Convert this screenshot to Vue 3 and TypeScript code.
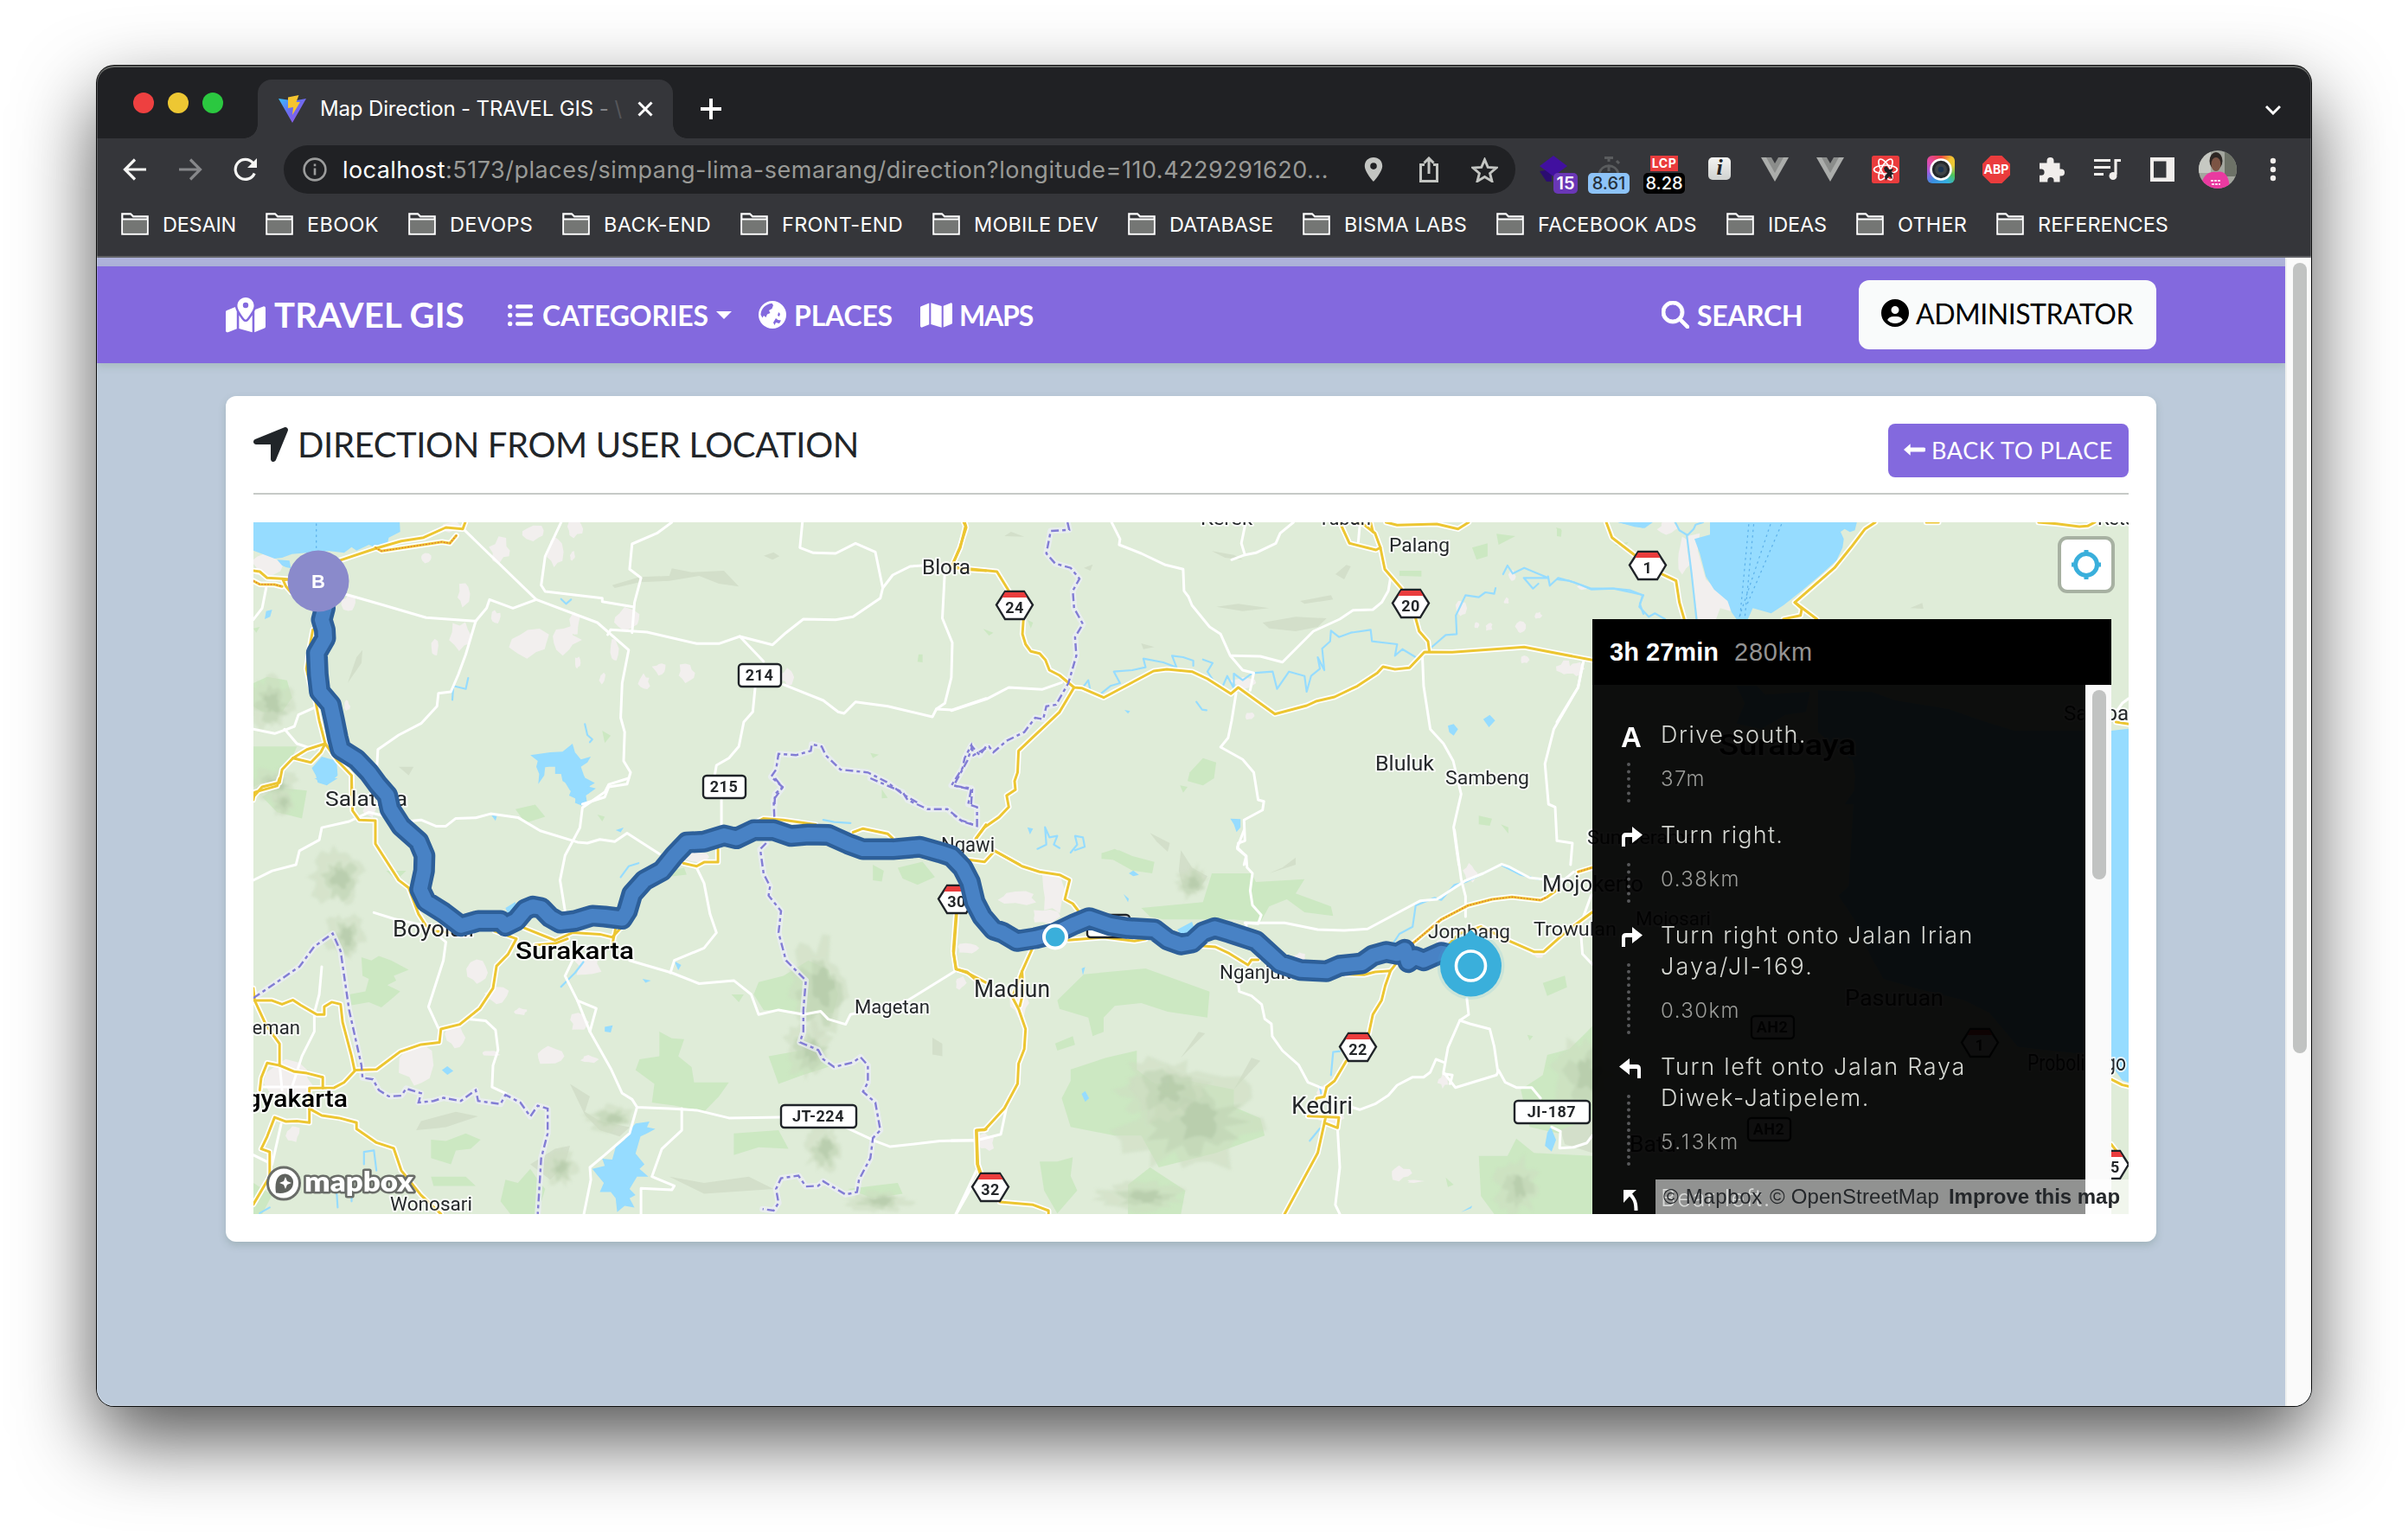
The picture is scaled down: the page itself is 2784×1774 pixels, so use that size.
<script setup lang="ts">
// ---------- text fitting ----------
// Sets the tracking of a label so that it takes exactly the given width.
const vFit = {
  mounted(el: HTMLElement, binding: { value: number }) {
    const natural = el.getBoundingClientRect().width
    const count = (el.textContent ?? '').length
    el.style.letterSpacing = `${(binding.value - natural) / count}px`
    el.style.width = `${binding.value}px`
  },
}

// ---------- browser chrome ----------
const bookmarks: [string, number][] = [
  ['DESAIN', 85], ['EBOOK', 83], ['DEVOPS', 96], ['BACK-END', 124], ['FRONT-END', 140],
  ['MOBILE DEV', 144], ['DATABASE', 120], ['BISMA LABS', 142], ['FACEBOOK ADS', 184],
  ['IDEAS', 68], ['OTHER', 80], ['REFERENCES', 151],
]

// ---------- directions ----------
interface Step { icon: string; lines: [string, number][]; distance: string; width: number }
const steps: Step[] = [
  { icon: 'depart', lines: [['Drive south.', 169]], distance: '37m', width: 52 },
  { icon: 'right', lines: [['Turn right.', 142]], distance: '0.38km', width: 92 },
  { icon: 'right', lines: [['Turn right onto Jalan Irian', 362], ['Jaya/Jl-169.', 177]], distance: '0.30km', width: 92 },
  { icon: 'left', lines: [['Turn left onto Jalan Raya', 353], ['Diwek-Jatipelem.', 242]], distance: '5.13km', width: 92 },
  { icon: 'slight', lines: [['Bear left.', 128]], distance: '', width: 0 },
]

// ---------- map ----------
// Each survey sheet has its own scale and origin on the 2168 x 800 canvas.
type Sheet = [sx: number, sy: number, ox: number, oy: number]
const sheets: Record<string, Sheet> = {
  nw: [0.574, 0.33333, -53, -174],
  sw: [0.574, 0.35714, -53, 296],
  n: [0.5102, 0.33333, 807, -44],
  s: [0.5102, 0.33333, 807, 356],
  ne: [0.4719, 0.33333, 1507, -174],
  se: [0.4719, 0.35714, 1507, 296],
}
const project = (sheet: string, pts: string) => {
  const [sx, sy, ox, oy] = sheets[sheet]
  return pts.split(' ').map((p) => {
    const [x, y] = p.split(',').map(Number)
    return `${(x * sx + ox).toFixed(1)},${(y * sy + oy).toFixed(1)}`
  }).join(' ')
}
const layer = (src: Record<string, string[]>) =>
  Object.entries(src).flatMap(([sheet, list]) => list.map((pts) => project(sheet, pts)))

const random = (seed: number) => {
  let s = seed
  return () => ((s = (s * 16807) % 2147483647) / 2147483647)
}
const star = (cx: number, cy: number, rx: number, ry: number, n: number, low: number, seed: number) => {
  const rnd = random(seed * 7919 + 13)
  rnd()
  return Array.from({ length: n }, (_, i) => {
    const r = low + (1 - low) * rnd()
    const a = (i / n) * Math.PI * 2
    return `${(cx + Math.cos(a) * rx * r).toFixed(1)},${(cy + Math.sin(a) * ry * r).toFixed(1)}`
  }).join(' ')
}
const patch = (sheet: string, x: number, y: number, rx: number, ry: number, n: number, low: number, seed: number) => {
  const [sx, sy, ox, oy] = sheets[sheet]
  return star(x * sx + ox, y * sy + oy, rx * sx, ry * sy, n, low, seed)
}

const townSpots: [string, number, number, number, number][] = [
  ['nw', 590, 620, 28, 50], ['nw', 660, 560, 32, 30], ['nw', 740, 545, 20, 35], ['nw', 650, 940, 50, 60], ['nw', 720, 930, 35, 60],
  ['nw', 510, 915, 26, 60], ['nw', 845, 860, 38, 45], ['nw', 700, 625, 18, 60], ['nw', 965, 1045, 22, 40], ['nw', 440, 645, 18, 22],
  ['nw', 515, 770, 15, 55], ['nw', 910, 1030, 16, 28], ['nw', 1170, 1060, 20, 34], ['nw', 120, 670, 36, 45], ['nw', 285, 800, 18, 35],
  ['nw', 740, 870, 14, 50], ['nw', 820, 960, 10, 50], ['nw', 458, 950, 10, 40], ['nw', 880, 1075, 14, 30], ['nw', 580, 850, 12, 26],
  ['nw', 735, 640, 8, 20], ['nw', 490, 540, 30, 22], ['nw', 745, 1010, 8, 26], ['nw', 795, 1065, 8, 26], ['nw', 280, 1160, 8, 22],
  ['sw', 545, 630, 25, 48], ['sw', 585, 705, 30, 36], ['sw', 420, 930, 38, 90], ['sw', 500, 840, 26, 48], ['sw', 765, 600, 34, 50],
  ['sw', 690, 900, 32, 34], ['sw', 750, 790, 26, 34], ['sw', 165, 970, 66, 75], ['sw', 1530, 550, 28, 22], ['sw', 172, 1150, 18, 36],
  ['sw', 570, 890, 26, 12], ['sw', 770, 910, 22, 14], ['sw', 630, 755, 20, 14], ['sw', 985, 255, 26, 24], ['sw', 325, 100, 18, 30],
  ['n', 665, 690, 40, 34], ['n', 1155, 430, 14, 45], ['n', 1290, 500, 15, 26], ['n', 1390, 640, 24, 32], ['n', 1270, 320, 10, 26],
  ['n', 677, 805, 13, 16], ['n', 1218, 495, 10, 18], ['n', 1330, 455, 10, 16], ['n', 1300, 610, 14, 16], ['n', 1258, 405, 7, 14], ['n', 1190, 490, 7, 14],
  ['s', 232, 220, 42, 95], ['s', 150, 235, 60, 34], ['s', 210, 300, 44, 36], ['s', 78, 1085, 22, 36], ['s', 1175, 150, 18, 40],
  ['s', 155, 600, 26, 50], ['s', 790, 440, 16, 22], ['s', 860, 1000, 32, 24], ['s', 1330, 430, 22, 14], ['s', 1115, 870, 15, 28],
  ['s', 1018, 1190, 28, 30], ['s', 1052, 1218, 28, 6], ['s', 1120, 385, 28, 22], ['s', 20, 530, 16, 26], ['s', 840, 905, 16, 26],
  ['ne', 310, 640, 22, 70], ['ne', 272, 540, 32, 28], ['ne', 63, 748, 15, 10], ['ne', 18, 1028, 16, 22], ['ne', 50, 1030, 22, 30],
]
const towns = townSpots.map(([s, x, y, rx, ry], i) => patch(s, x, y, rx, ry, 11, 0.5, i + 1))
towns.push(project('ne', '320,570 350,560 345,620 365,720 425,800 425,830 400,820 390,858 345,858'))

const parks = layer({
  nw: ['92,1080 120,1058 160,1070 170,1130 150,1180 110,1180 92,1160', '92,1300 180,1300 170,1340 140,1400 92,1440',
    '795,1245 812,1262 800,1288', '1335,1322 1352,1328 1340,1340', '1358,1448 1370,1478 1358,1480', '1432,980 1440,980 1440,1008 1430,1006', '92,890 105,885 98,905'],
  sw: ['310,580 330,590 345,575 370,590 405,620 375,640 380,655 362,670 388,690 370,715 350,742 325,725 290,735 285,700 318,690 325,650 312,640', '910,820 935,842 960,845 948,900 975,935 980,985 1050,985 1030,1030 1000,1080 940,1060 895,1050 900,990 862,945 870,910 910,900',
    '450,1170 480,1175 520,1150 550,1170 530,1200 500,1205 490,1250 450,1230', '1110,660 1160,640 1210,590 1250,620 1270,700 1260,760 1120,750 1100,700', '1130,900 1200,880 1260,930 1200,960 1150,990',
    '600,1300 625,1310 650,1265 665,1300 680,1330 665,1411 610,1411 590,1370', '1340,280 1362,300 1358,335 1340,330', '1390,290 1440,270 1465,320 1430,345 1400,325', '1060,1150 1150,1140 1170,1200 1110,1195 1060,1220',
    '110,60 140,30 200,40 190,130 140,110', '620,100 660,85 680,125 640,145', '930,300 960,290 965,312 935,318', '1055,700 1080,700 1070,725', '450,1290 520,1290 540,1320 455,1320',
    '92,1310 130,1350 110,1411 92,1411', '1290,1330 1390,1310 1400,1345 1340,1360', '400,300 380,330 360,300', '785,118 800,125 795,140'],
  n: ['540,1000 570,950 600,965 595,1020 570,1045 535,1030', '1180,220 1215,205 1215,250 1190,262', '1235,172 1278,180 1240,210', '1195,1150 1225,1160 1220,1185 1195,1180',
    '1015,300 1065,300 1065,320 1015,318', '340,1280 370,1265 430,1310 340,1300', '518,1045 535,1050 525,1070', '172,470 185,480 180,500', '72,502 95,515 85,525', '1370,150 1382,155 1380,182', '1245,1180 1262,1190 1262,1212'],
  s: ['590,150 680,150 690,180 800,170 780,220 860,265 865,298 800,285 760,240 720,265 700,320 640,310 480,310 450,300 430,270 570,250', '240,590 300,500 440,480 585,560 580,650 490,630 430,600 370,610 345,650 345,700 320,715 310,650 245,620',
    '340,80 380,70 410,90 460,110 455,150 410,140', '270,830 350,790 420,765 420,830 460,880 540,870 640,900 640,960 700,1000 710,1060 600,1120 470,1170 430,1060 370,1060 270,1030 250,930 270,870',
    '200,1150 240,1150 275,1135 270,1200 285,1250 240,1330 210,1250', '1195,1130 1260,1130 1280,1070 1320,1120 1452,1130 1452,1332 1230,1332 1200,1270', '1452,680 1452,1030 1400,1060 1310,1030 1290,900 1340,850 1350,780 1400,760 1440,700',
    '1340,530 1390,505 1395,545 1350,575', '400,1230 450,1170 530,1250 520,1332 400,1332', '235,740 275,715 280,745 240,765', '1120,1205 1138,1230 1125,1238', '1305,710 1318,715 1310,730'],
  ne: ['0,545 12,550 10,572 0,570', '140,600 175,590 165,612'],
})

const ridgeSpots: [string, number, number, number, number][] = [
  ['sw', 260, 320, 68, 110], ['sw', 275, 510, 48, 95], ['sw', 1230, 680, 78, 180], ['sw', 1210, 880, 60, 110], ['s', 540, 1000, 190, 210], ['s', 480, 900, 120, 130],
  ['s', 545, 180, 46, 70], ['nw', 125, 1150, 60, 110], ['sw', 810, 1100, 60, 50], ['s', 1430, 850, 80, 170], ['s', 1280, 1235, 60, 120], ['nw', 130, 1430, 60, 70],
  ['sw', 710, 1260, 40, 70], ['sw', 1240, 1200, 45, 90], ['s', 430, 1270, 120, 60], ['sw', 1350, 1370, 80, 40], ['sw', 150, 80, 30, 50],
]
const ridges = ridgeSpots.flatMap(([s, x, y, rx, ry], i) => [
  { pts: patch(s, x, y, rx, ry, 30, 0.55, i + 101), fill: '#cddcc1', opacity: 0.55 },
  { pts: patch(s, x + rx * 0.06, y + ry * 0.06, rx * 0.68, ry * 0.68, 26, 0.45, i + 211), fill: '#c0d4b4', opacity: 0.6 },
  { pts: patch(s, x + rx * 0.1, y, rx * 0.36, ry * 0.42, 18, 0.4, i + 307), fill: '#b0c7a5', opacity: 0.6 },
])
const hills = layer({
  nw: ['815,740 870,712 930,708 935,682 975,695 1040,690 1070,745 1030,735 990,708 930,725 870,730 820,750', '1120,638 1140,626 1152,640 1138,652', '385,1370 415,1370 405,1400', '300,990 312,965 310,1010 282,1080'],
  sw: ['730,990 770,1030 760,1080 790,1110 850,1130 830,1160 790,1140 760,1090', '430,1110 500,1080 545,1095 480,1130 420,1140', '650,1250 700,1200 730,1190 720,1250 690,1300', '830,1240 860,1290 845,1340', '930,1290 1000,1310 1090,1290 1140,1330 1000,1345', '1460,840 1480,860 1480,900 1460,895'],
  n: ['120,180 135,165 165,182', '590,232 640,245 660,262 620,255', '600,425 650,415 720,430 660,440', '705,480 780,460 850,465 830,495 780,510 720,500', '870,312 895,280 905,285 890,330', '790,405 860,385 865,400 800,415', '80,152 160,150', '430,552 460,565 435,572', '300,290 320,278 315,300'],
  s: ['450,10 495,45 490,75 465,40', '520,70 545,130 580,160 560,210 525,200 515,140', '680,790 700,800 640,900', '750,130 780,95 780,120 720,150', '1380,1040 1452,1000 1452,1120 1390,1090', '560,700 575,705 520,790'],
  ne: ['865,820 895,802 898,822', '1370,520 1380,520'],
})

const water = layer({
  nw: ['92,522 387,522 388,555 365,575 362,598 340,612 325,600 300,620 290,608 275,628 245,622 200,628 170,632 150,645 135,648 92,620', '140,652 165,655 168,682 158,678 150,672',
    '650,1330 690,1320 715,1318 735,1290 740,1320 752,1345 772,1335 765,1355 752,1370 758,1400 770,1440 782,1445 762,1470 765,1500 748,1500 740,1480 728,1470 735,1440 715,1420 712,1395 700,1395 700,1370 688,1370 680,1372 678,1400 666,1430 668,1395 662,1370 665,1350',
    '210,1375 230,1335 260,1350 262,1400 240,1435 222,1425 218,1400', '118,830 130,825 126,850 115,858'],
  sw: ['862,1118 890,1112 885,1130 902,1135 885,1150 872,1160 862,1215 880,1250 870,1265 888,1290 865,1290 850,1330 862,1350 850,1360 860,1390 840,1385 825,1405 822,1360 812,1340 790,1340 798,1310 785,1285 775,1265 800,1255 795,1232 815,1235 822,1195 840,1170 850,1140',
    '715,0 762,0 780,15 765,30 768,50 752,45 755,90 740,80 742,50 730,40', '472,945 483,932 495,948 483,960', '800,805 816,800 812,823 800,820', '940,592 954,605 948,622', '600,420 620,400 622,430 605,440', '215,0 262,0 240,22',
    '572,120 583,122 580,138', '822,168 838,160 832,175', '876,650 893,655 882,662'],
  n: ['1125,838 1138,832 1148,850 1138,872 1128,860', '1205,815 1220,800 1232,820 1218,843', '632,1160 655,1162 655,1190 646,1207 640,1180', '172,1190 185,1195 178,1215', '392,783 405,787 400,796', '1510,132 1568,132 1568,152'],
  s: ['512,345 545,318 550,340 565,345 540,355 520,365', '295,915 303,905 312,930 303,943', '390,222 402,238 400,250', '402,150 412,140 425,155 412,160', '1350,1050 1358,1030 1370,1075 1360,1115 1345,1095', '1155,1325 1180,1303 1178,1312', '295,480 303,475 298,503'],
  ne: ['375,522 735,522 730,550 718,556 705,545 695,555 703,580 700,610 685,655 650,700 600,760 555,810 525,838 480,820 468,858 440,858 428,835 418,795 385,755 365,710 350,630 337,580 375,565', '150,522 235,522 215,542 190,538',
    '640,1105 770,1110 830,1140 960,1170 1040,1210 1120,1245 1358,1245 1401,1238 1401,1500 705,1500 735,1440 725,1350 640,1250', '440,1090 490,1090 510,1120 620,1110 610,1180 560,1190 500,1240 440,1220 460,1150'],
  se: ['730,0 1401,0 1401,985 1385,978 1370,950 1340,900 1130,870 1060,760 1000,720 880,680 800,650 770,580 730,460 690,380 715,350'],
})
const rivers = layer({
  nw: ['493,1138 495,1090 520,1100 525,1062', '760,1222 765,1260 775,1275 770,1285', '712,788 722,805 732,790'],
  sw: ['712,675 740,630 757,595', '1240,135 1262,142 1295,145', '832,320 848,285 868,275', '315,1250 315,1210 335,1205 340,1270', '262,1390 260,1340 290,1330 290,1370', '105,1408 125,1390'],
  n: ['300,700 310,680 314,710', '340,725 360,700 382,690 368,650 410,645 440,635 435,605 480,618 510,635 500,595 525,600 548,612 548,630', '570,608 592,620 580,650 605,708', '615,700 625,665 640,708 640,657 660,680 682,655 728,650 738,710 765,650 800,665 805,720 815,665 835,640 830,600 845,645 840,570 858,545 860,508 878,530 905,515 950,505 953,545 1010,555 1005,595 1022,572 1052,600',
    '1087,567 1120,523 1145,520 1143,455 1165,385 1195,392 1210,375 1230,380 1233,360', '1250,312 1260,282 1272,310 1298,290 1352,325 1297,325 1318,362 1330,345', '1352,320 1356,352 1375,325 1410,340 1450,362 1500,362 1540,375 1568,385 1560,415 1568,450',
    '195,1265 215,1250 212,1190 222,1225 240,1220 232,1250 245,1262', '270,1278 285,1250 280,1220 298,1225 302,1258 280,1270', '555,755 568,782 578,784'],
  s: ['1000,395 1015,360 1045,335 1052,262 1095,235 1110,242 1140,190 1165,180 1205,150 1245,120 1290,155 1330,170', '880,767 865,770 860,850', '812,1078 835,1035', '835,890 838,915'],
  ne: ['318,565 330,700 342,858', '290,522 300,550 320,567 335,545 340,530 358,522', '0,720 30,725 60,740 85,755 140,752 180,758 210,775 202,815 225,850 240,838 265,858'],
})

const minorRoads = layer({
  nw: ['515,545 662,790 785,870 848,965 835,1080 832,1200 840,1250 838,1350 852,1390 845,1430 808,1440 800,1475 755,1500', '712,522 680,640 672,740 680,762 795,785 795,797 857,815', '935,522 905,560 855,597 850,685 873,715 860,800 855,905',
    '275,770 345,805 440,853 540,865 562,820 568,790 615,820 662,790', '540,865 520,980 505,1050 490,1110 465,1115 462,1160 430,1220 385,1260 360,1290 343,1310 340,1400 345,1450', '812,895 885,903 985,943 1030,943 1072,918 1138,947 1165,905 1200,858 1265,860 1300,850 1355,785 1360,750 1380,705 1415,675 1440,672',
    '812,895 806,912', '1072,918 1120,1005', '1103,1095 1098,1180 1080,1215 1070,1300 1050,1340 1025,1365 1022,1395', '1198,522 1193,610 1220,628 1265,630 1305,595 1345,625 1360,750',
    '1485,690 1480,855 1500,940 1498,1060 1485,1150 1468,1170 1460,1197 1370,1160 1305,1145 1282,1185 1270,1180 1240,1140 1160,1085', '1468,1170 1500,1173 1568,1133', '92,860 110,820 118,750', '92,1240 135,1255 160,1240 175,1230 183,1190 215,1165', '155,1240 180,1290 215,1310'],
  sw: ['92,330 130,300 178,280 185,235 225,200 230,160 285,140 325,110 400,140 430,135 460,155 480,155 500,130 540,128 570,115 625,127 670,170 745,207 765,210 790,198 820,205 845,178 910,245', '848,0 808,20 800,45 755,95 750,160 720,250 710,330 720,430',
    '335,435 375,455 440,478 480,530 475,590 445,740 465,810', '230,610 225,700 215,760 215,820 190,900 170,1000', '525,780 560,785 580,815 585,880 575,930 573,1000 600,1020', '735,590 720,640 745,720 770,820 812,940 835,1020 855,1040 865,1065 930,1070 985,1075 1050,1100 1155,1098',
    '745,720 783,745 770,820', '865,1065 850,1150 800,1220 770,1260 772,1300 758,1411', '955,1070 955,1140 915,1200 895,1290 940,1320 935,1333 873,1328 873,1411', '850,590 935,630 990,665 1060,655 1095,700 1110,765 1150,750 1200,765 1235,755 1250,780 1285,797 1295,765 1410,720 1505,625',
    '985,290 1000,340 1012,440 1025,500 1000,550 940,590 932,630', '1035,70 1035,150', '1285,1130 1345,1175 1375,1193 1475,1175 1548,1172', '148,1120 130,1250 92,1220', '105,1000 200,1000', '145,925 150,1010', '1558,1270 1508,1411'],
  n: ['363,132 382,190 380,210 430,240 485,280 525,295 527,370 537,390 545,420 585,495 610,520 632,595 660,645 685,655 677,715', '665,145 657,205 665,245 635,262', '665,245 690,238 735,205 745,170 775,132', '635,595 700,597 750,617 820,510 880,468 910,437 955,435 975,410 990,370 995,325',
    '645,725 635,820 627,880 610,912 660,955 685,1000 695,1095 708,1100 705,1130 663,1165 665,1237 650,1245 648,1265 668,1290 663,1320', '1067,590 1070,700 1085,850 1115,900 1137,960 1155,1075 1143,1155 1138,1190 1145,1270 1150,1320',
    '1430,625 1420,705 1365,850 1345,970 1353,1110 1368,1120 1372,1237 1407,1245 1403,1320', '0,785 80,745 105,725 130,705 205,712 250,688', '925,150 922,200'],
  s: ['663,0 648,60 668,90 670,130 682,150 677,210 682,260 702,295 695,325 665,322', '665,322 755,322 830,345 890,348 943,343 1062,245 1100,240 1140,200 1165,175 1205,150 1247,118 1265,128 1310,165 1340,170 1390,170 1410,145', '1140,0 1155,170 1165,230 1165,300', '668,322 668,350',
    '650,530 652,560 680,575 703,605 710,655 725,672 727,715 750,765 787,815 808,875 840,895', '1168,585 1172,640 1152,660 1125,755 1115,840 1142,893 1235,850 1240,833 1255,875 1280,893 1315,893 1335,930', '1152,660 1175,672 1220,690 1230,750 1238,835',
    '1115,805 1098,795 1085,840 1070,857 1045,857 1010,885 990,920 960,950 925,970 905,960', '1115,845 1135,850 1130,880', '875,1035 880,1170 870,1300 880,1332', '1360,1030 1380,1045 1378,1103 1410,1100 1440,1085 1452,1060', '0,1077 55,1077 112,1055 130,925', '60,1170 10,1332', '1450,225 1425,330 1430,430 1452,465'],
  ne: ['65,1005 52,1095 0,1215', '1401,1133 1385,1150 1370,1180'],
})
const majorRoads = layer({
  nw: ['519,522 514,545 480,540 435,575 390,587 340,612 270,652 228,680', '501,568 488,595 472,590 350,622 338,610', '92,690 105,693 120,715 150,718 165,720 152,722 158,745 168,765', '92,725 105,737 135,738 150,745', '1525,522 1528,540 1515,610 1500,670 1520,685 1568,690',
    '212,895 205,960 199,1030 207,1090 217,1140 225,1210 237,1290 200,1310 172,1340 150,1380 145,1425 110,1440 92,1475', '172,1340 208,1355 228,1320 237,1290 262,1350 290,1400 290,1500'],
  sw: ['290,0 292,105 305,135 338,137 338,212 385,330 405,355 425,440 440,478 458,495 520,505', '92,70 95,45 140,25 145,0', '578,495 622,520 605,570 582,608 575,680 548,745 508,797 470,812 467,855 430,862 388,885 340,943 298,945 275,985 255,1002 205,1003 205,1115 180,1110 158,1112 135,1098 120,1160 108,1200 125,1210 125,1290 92,1380',
    '92,680 95,720 118,800 145,860 145,930 120,922 108,970 105,1010', '145,930 175,950 200,955 232,968 232,1003', '95,720 130,720 150,732 172,718 188,735 220,765 235,765 235,740 250,725 268,732 272,790 290,900 296,945', '205,1070 230,1092 265,1100 300,1115 300,1135 340,1180 375,1198 390,1270 430,1350 470,1411',
    '638,485 700,525 735,500 790,505 815,515 832,485', '660,540 700,535 725,520', '822,485 815,540', '958,275 985,285 1000,272 1028,272 1028,230', '1108,140 1120,130 1160,135 1225,150', '1300,175 1320,163 1370,180 1380,195', '1508,430 1502,560 1508,618 1530,630 1568,662', '1548,195 1568,150', '1568,1137 1548,1140 1550,1250 1558,1290'],
  n: ['28,132 32,145 20,220 5,270', '0,290 40,293 103,303 130,370', '163,470 161,520 168,555 180,580 200,587 213,610 222,645 245,663 278,705 295,707 345,740 458,648 488,642 545,650 580,675 633,727 650,705 733,797 805,768 828,752 868,738 920,700 965,655 978,633 1005,642 1038,637 1072,582 1135,583 1298,565 1452,610 1568,640',
    '278,705 245,790 152,925 150,1000 143,1030 145,1060 125,1080 130,1120 108,1155 75,1190 55,1230', '880,132 902,205 962,228 972,220 960,170 935,140 915,132', '950,132 955,165', '972,220 982,295 1020,362', '1052,465 1060,510 1080,545 1083,578', '985,132 1010,142 1100,138 1148,155 1172,132', '35,1302 75,1310 98,1272 155,1320'],
  s: ['98,72 160,125 200,145 245,155 268,173 257,240 275,255 290,285', '12,290 5,430 10,482 35,492 60,525', '265,382 345,372 415,385 440,378', '185,405 160,490 138,580 152,620 168,690 165,760 152,810 150,880 120,965 75,1040 57,1042 60,1160 68,1195', '160,490 163,560 155,610', '110,1290 185,1300 220,1320 220,1332',
    '570,402 598,405 630,428 672,468 680,450 695,450', '895,500 935,502 960,492 995,488 983,540 975,590 955,640 946,705', '995,488 1040,400 1110,310 1170,262 1225,240 1270,232 1335,243 1350,232 1375,205', '1420,145 1452,130', '1265,385 1320,422 1342,422 1395,350 1430,310 1452,285', '1125,400 1150,360 1200,335 1265,385',
    '895,800 868,870 850,892 845,925 828,930 825,940', '808,992 878,997 875,1033 845,1015 848,997 830,1120 755,1332'],
  ne: ['121,522 135,575 190,635', '255,700 292,725 300,800 312,858', '780,522 755,545 720,610 680,680 583,800 637,858', '583,800 600,822 597,845 555,858', '1180,522 1225,527 1280,537 1300,535 1318,522', '905,522 935,522', '1370,1215 1401,1222'],
  se: ['1358,975 1385,993 1401,998', '1358,1185 1370,1205'],
})
const tollRoads = layer({
  nw: ['501,568 488,595 472,590 350,622 338,610', '92,725 105,737 135,738 150,745'],
  s: ['1040,400 1110,310 1170,262 1225,240 1270,232 1335,243 1350,232', '1420,145 1452,130'],
})
const borders = layer({
  nw: ['1142,1500 1143,1465 1158,1440 1135,1405 1145,1380 1150,1325 1185,1330 1215,1315 1217,1292 1237,1300 1245,1330 1275,1380 1330,1390 1370,1425 1400,1465 1435,1500', '1538,1500 1540,1450 1503,1435 1530,1350 1540,1300 1555,1330 1568,1300'],
  sw: ['1143,0 1158,30 1140,70 1142,140', '1125,210 1113,230 1120,310 1133,350 1130,380 1155,430 1150,500 1165,590 1205,655 1200,750 1200,820 1193,855 1230,880 1240,910 1262,935 1300,920 1315,903 1330,930 1330,985 1320,1015 1345,1050 1355,1140 1340,1165 1335,1230 1312,1300 1308,1340 1285,1348 1240,1305 1230,1320 1205,1322 1190,1287 1155,1295 1145,1330 1150,1375 1140,1400 1118,1395',
    '92,712 185,610 215,545 252,503 268,560 285,750 310,930 312,970 333,975 345,1010 365,1030 390,1028 400,1005 430,1020 425,1050 455,1045 475,1035 510,1045 540,1010 545,1045 590,1055 600,1025 630,1050 650,1095 665,1060 685,1070 685,1150 672,1230 665,1411', '1335,0 1400,45 1410,70 1450,100 1490,100 1520,140 1550,155'],
  n: ['263,132 267,158 225,162 215,240 235,275 270,290 290,328 275,370 278,430 298,485 280,530 283,595 265,690 237,765 215,770 208,815 190,810 165,860 125,890 95,930 85,910 50,940 45,905 30,950 25,985 0,1045 45,1055 38,1110 58,1120 58,1185 20,1165 0,1140'],
})
const ferries = layer({
  nw: ['219,528 219,610'],
  ne: ['470,530 448,858', '482,530 460,858', '523,530 445,858', '550,530 465,810'],
})
const route = [
  project('nw', '232,790 236,820 230,860 236,895 237,925 220,975 222,1050 226,1110 248,1155 255,1210 262,1270 268,1310 300,1345 325,1390 342,1430 362,1470'),
  project('sw', '368,100 390,155 425,205 437,250 436,300 428,360 440,400 475,435 510,478 545,462 590,462 600,478 622,460 640,425 655,415 672,420 690,450 710,468 740,462 775,445 800,448 835,455 845,430 855,375 880,330 915,300 940,250 965,208 1000,205 1040,185 1065,195 1100,168 1140,168 1175,187 1210,182 1250,183 1290,212 1320,230 1380,230 1435,222 1475,240'),
  project('s', '0,90 25,130 42,180 53,250 70,300 95,345 115,355 148,385 190,375 235,358 280,325 312,305 360,330 400,340 460,345 490,380 520,397 545,390 570,355 597,340 630,355 690,385 715,420 745,462 790,485 850,490 880,470 930,462 955,435 985,422 1010,430 1027,415 1035,458 1050,440 1070,452 1110,425 1150,440'),
].join(' ')

interface Place { t: string; x: number; y: number; w: number; s: number; b?: boolean }
const places: Place[] = [
  { t: 'Blora', x: 773, y: 60, w: 56, s: 23 },
  { t: 'Salatiga', x: 83, y: 328, w: 95, s: 24 },
  { t: 'Boyolali', x: 161, y: 479, w: 94, s: 25 },
  { t: 'Surakarta', x: 303, y: 505, w: 137, s: 28, b: true },
  { t: 'Yogyakarta', x: -43, y: 676, w: 152, s: 28, b: true },
  { t: 'Sleman', x: -20, y: 592, w: 74, s: 22 },
  { t: 'Magetan', x: 695, y: 568, w: 87, s: 22 },
  { t: 'Wonosari', x: 158, y: 796, w: 95, s: 22 },
  { t: 'Ngawi', x: 795, y: 381, w: 62, s: 23 },
  { t: 'Madiun', x: 833, y: 549, w: 88, s: 27 },
  { t: 'Nganjuk', x: 1117, y: 528, w: 82, s: 22 },
  { t: 'Kediri', x: 1200, y: 684, w: 71, s: 27 },
  { t: 'Jombang', x: 1358, y: 481, w: 95, s: 22 },
  { t: 'Trowulan', x: 1480, y: 478, w: 96, s: 22 },
  { t: 'Mojokerto', x: 1490, y: 427, w: 117, s: 26 },
  { t: 'Sumberame', x: 1542, y: 372, w: 126, s: 22 },
  { t: 'Palang', x: 1313, y: 34, w: 70, s: 22 },
  { t: 'Kerek', x: 1095, y: 3, w: 60, s: 22 },
  { t: 'Tuban', x: 1231, y: 3, w: 61, s: 23 },
  { t: 'Bluluk', x: 1297, y: 287, w: 68, s: 23 },
  { t: 'Sambeng', x: 1378, y: 303, w: 97, s: 22 },
  { t: 'Surabaya', x: 1694, y: 269, w: 159, s: 34, b: true },
  { t: 'Mojosari', x: 1598, y: 466, w: 87, s: 22 },
  { t: 'Pasuruan', x: 1840, y: 559, w: 114, s: 26 },
  { t: 'Probolinggo', x: 2051, y: 634, w: 114, s: 25 },
  { t: 'Batu', x: 1591, y: 728, w: 54, s: 26 },
  { t: 'Sampang', x: 2093, y: 229, w: 102, s: 24 },
  { t: 'Ketapang', x: 2132, y: 3, w: 92, s: 22 },
]
const plates = [
  { t: '214', x: 560, y: 163, w: 50 }, { t: '215', x: 519, y: 292, w: 50 }, { t: 'JT-224', x: 609, y: 673, w: 88 },
  { t: 'JI-187', x: 1457, y: 668, w: 88 }, { t: '', x: 963, y: 453, w: 50 }, { t: 'AH2', x: 1731, y: 570, w: 50 }, { t: 'AH2', x: 1727, y: 688, w: 50 },
]
const hexes = [
  { t: '24', x: 880, y: 96 }, { t: '20', x: 1338, y: 94 }, { t: '1', x: 1612, y: 50 }, { t: '30', x: 813, y: 436 },
  { t: '22', x: 1277, y: 607 }, { t: '32', x: 852, y: 769 }, { t: '1', x: 1996, y: 602 }, { t: '15', x: 2147, y: 743 },
]
</script>

<template>
  <div class="desktop">
    <div class="window">
      <header class="tabstrip">
        <div class="lights"><i class="red" /><i class="yellow" /><i class="green" /></div>
        <div class="tab">
          <svg class="favicon" viewBox="0 0 32 32">
            <defs>
              <linearGradient id="vite" x1="0" y1="0" x2="1" y2="1"><stop offset="0" stop-color="#35c2ff" /><stop offset=".45" stop-color="#6b6df0" /><stop offset="1" stop-color="#9b52e8" /></linearGradient>
            </defs>
            <path d="M0 4 16 32 32 4 18 6.500z" fill="url(#vite)" />
            <path d="M11 2.500 23.500 0 20.500 8 25 8 16 23 17 14 11 15z" fill="#f5c52f" />
          </svg>
          <span class="tab-title"><span v-fit="316">Map Direction - TRAVEL GIS</span><span class="faded"> - </span><span class="ghost">\</span></span>
          <svg class="tab-close" viewBox="0 0 18 18"><path d="M1.500 1.500 16.500 16.500M16.500 1.500 1.500 16.500" /></svg>
        </div>
        <svg class="plus" viewBox="0 0 24 24"><path d="M12 0V24M0 12H24" /></svg>
        <svg class="chevron" viewBox="0 0 18 12"><path d="M1 2 9 10 17 2" /></svg>
      </header>

      <div class="toolbar">
        <svg class="nav" viewBox="0 0 28 28"><path d="M27 14H3M14 2.500 2.500 14 14 25.500" /></svg>
        <svg class="nav dim" viewBox="0 0 28 28"><path d="M1 14H25M14 2.500 25.500 14 14 25.500" /></svg>
        <svg class="nav" viewBox="0 0 28 28"><path d="M24.200 18.500A11.500 11.500 0 1 1 22.500 6.500L24 8.500" /><path d="M27 1V12H16z" class="solid" /></svg>
        <div class="omnibox">
          <svg class="info" viewBox="0 0 28 28"><circle cx="14" cy="14" r="12.400" /><path d="M14 12.500V20.500M14 7.500V10.300" /></svg>
          <span v-fit="119" class="host">localhost</span>
          <span v-fit="1021" class="path">:5173/places/simpang-lima-semarang/direction?longitude=110.4229291620...</span>
          <svg class="pin" viewBox="0 0 22 28"><path fill-rule="evenodd" d="M11 0C5 0 .8 4.300.8 10 .8 17 11 28 11 28S21.200 17 21.200 10C21.200 4.300 17 0 11 0zm0 6.300a3.800 3.800 0 1 1 0 7.600 3.800 3.800 0 0 1 0-7.600z" /></svg>
          <svg class="share" viewBox="0 0 24 30"><path d="M7 9.500H2.500V28.500H21.500V9.500H17M12 20V2.500M6.500 7.500 12 2 17.500 7.500" /></svg>
          <svg class="starred" viewBox="0 0 30 28"><path d="M15 2.500 18.600 11 28 11.700 20.900 17.800 23.200 26.700 15 21.800 6.800 26.700 9.100 17.800 2 11.700 11.400 11z" /></svg>
        </div>
        <div class="extensions">
          <div class="slot">
            <svg class="ext" viewBox="0 0 32 32"><path d="M0 18 8 30 14 30 14 16z" fill="#2b0d70" /><path d="M16 0 32 12 16 24 0 12z" fill="#41109f" /></svg>
            <b class="badge violet">15</b>
          </div>
          <div class="slot">
            <svg class="ext" viewBox="0 0 32 32"><path d="M5 20A11.500 11.500 0 0 1 27 20M11 2.500H21M16 3V7M16 11V18M25 6 28 9" stroke="#5a5c5e" stroke-width="3" fill="none" /></svg>
            <b class="badge sky">8.61</b>
          </div>
          <div class="slot">
            <span class="lcp">LCP</span>
            <b class="badge black">8.28</b>
          </div>
          <div class="slot"><span class="inspect">i</span></div>
          <div v-for="n in 2" :key="n" class="slot">
            <svg class="ext" viewBox="0 0 32 32"><path d="M0 2H32L16 30z" fill="#abadab" /><path d="M6 2H26L16 20z" fill="#8b8d8b" /><path d="M12 2H20L16 9z" fill="#35363a" /></svg>
          </div>
          <div class="slot">
            <svg class="ext" viewBox="0 0 32 32"><rect width="32" height="32" rx="2.500" fill="#ea3c3d" /><g fill="none" stroke="#fff" stroke-width="1.700"><ellipse cx="16" cy="16" rx="13.500" ry="5" /><ellipse cx="16" cy="16" rx="13.500" ry="5" transform="rotate(60 16 16)" /><ellipse cx="16" cy="16" rx="13.500" ry="5" transform="rotate(120 16 16)" /></g><path d="M14 14 17 12 20 16 25 15 23 19 26 21 23 22 24 27 20 24 16 29 15 24 18 20 15 18z" fill="#1f2124" /></svg>
          </div>
          <div class="slot"><span class="camera"><svg viewBox="0 0 32 32"><circle cx="16" cy="16" r="11.500" fill="#25282c" stroke="#fff" stroke-width="2.600" /><circle cx="16" cy="16" r="7" fill="#3e4348" /><circle cx="16" cy="16" r="3.200" fill="#1c3350" /></svg></span></div>
          <div class="slot"><span class="abp">ABP</span></div>
          <div class="slot">
            <svg class="ext" viewBox="0 0 32 32"><path d="M2 8.500H10.500V6A4 4 0 0 1 18.500 6V8.500H25.500V15.500H27A4 4 0 0 1 27 23.500H25.500V30.500H18.500V28.500A3.600 3.600 0 0 0 11.300 28.500V30.500H2V22.800H4A3.600 3.600 0 0 0 4 15.600H2z" fill="#f1eeec" /></svg>
          </div>
          <div class="slot">
            <svg class="ext" viewBox="0 0 32 32"><path d="M1 5.500H20M1 13.500H20M1 21.500H12M26 22V5.500H32" stroke="#f1eeec" stroke-width="3.200" fill="none" /><circle cx="23" cy="23.500" r="4.500" fill="#f1eeec" /></svg>
          </div>
          <div class="slot">
            <svg class="ext" viewBox="0 0 32 32"><path fill-rule="evenodd" d="M2 2H30V30H2zM6 6.500V25.500H20.500V6.500z" fill="#f1eeec" /></svg>
          </div>
          <div class="slot">
            <svg class="avatar" viewBox="0 0 44 44">
              <defs><clipPath id="round"><circle cx="22" cy="22" r="22" /></clipPath></defs>
              <g clip-path="url(#round)"><rect width="44" height="44" fill="#a4a79f" /><path d="M0 0H14V26H0z" fill="#c6c8c2" /><path d="M30 0H44V30H30z" fill="#6d7267" /><path d="M2 44C4 28 12 24 20 25 28 23 35 26 36 44z" fill="#e93aa0" /><ellipse cx="20" cy="12" rx="7.500" ry="10" fill="#2d2623" /><ellipse cx="20" cy="16" rx="5.500" ry="8" fill="#7c5444" /><path d="M14 35H26M15 39H25" stroke="#fbd3ea" stroke-width="2.200" stroke-dasharray="3 1" /></g>
            </svg>
          </div>
          <div class="slot"><svg class="ext" viewBox="0 0 32 32"><g fill="#f1eeec"><circle cx="16" cy="6" r="3.200" /><circle cx="16" cy="16" r="3.200" /><circle cx="16" cy="26" r="3.200" /></g></svg></div>
        </div>
      </div>

      <nav class="bookmarks">
        <span v-for="[name, width] in bookmarks" :key="name" class="bookmark">
          <svg class="folder" viewBox="0 0 32 26"><path d="M1.300 24.700V1.300H11L14 4.300H30.700V24.700z" fill="#35363a" stroke="#fff" stroke-width="2.200" /><path d="M2.400 8H29.600V23.600H2.400z" fill="#747674" /><path d="M1.300 7.600H30.700" stroke="#fff" stroke-width="2" /></svg>
          <span v-fit="width">{{ name }}</span>
        </span>
      </nav>

      <div class="viewport">
        <main class="page">
          <div class="navbar">
            <a class="brand">
              <svg viewBox="0 0 576 512"><path d="M408 120c0 54.600-73.100 151.900-105.200 192c-7.700 9.600-22 9.600-29.600 0C241.100 271.900 168 174.600 168 120C168 53.700 221.700 0 288 0s120 53.700 120 120zm8 80.400c3.500-6.900 6.700-13.800 9.600-20.600c.5-1.200 1-2.500 1.500-3.700l116-46.400C558.900 123.400 576 135 576 152V422.800c0 9.800-6 18.600-15.100 22.300L416 503V200.400zM137.600 138.300c2.400 14.100 7.200 28.300 12.800 41.500c2.900 6.800 6.100 13.700 9.600 20.600V451.800L32.900 502.700C17.100 509 0 497.400 0 480.400V209.600c0-9.800 6-18.600 15.100-22.300l122.600-49zM327.800 332c13.900-17.400 35.700-45.700 56.200-77V504.300L192 449.400V255c20.500 31.300 42.300 59.600 56.200 77c20.500 25.600 59.100 25.600 79.600 0zM288 152a40 40 0 1 0 0-80 40 40 0 1 0 0 80z" /></svg>
              <span v-fit="220">TRAVEL GIS</span>
            </a>
            <a class="link categories">
              <svg class="list" viewBox="0 0 32 32"><circle cx="3" cy="5" r="2.900" /><circle cx="3" cy="16" r="2.900" /><circle cx="3" cy="27" r="2.900" /><rect x="10" y="2.600" width="22" height="4.800" rx="2" /><rect x="10" y="13.600" width="22" height="4.800" rx="2" /><rect x="10" y="24.600" width="22" height="4.800" rx="2" /></svg>
              <span v-fit="192">CATEGORIES</span>
              <i class="caret" />
            </a>
            <a class="link places">
              <svg class="globe" viewBox="0 0 32 32"><circle cx="16" cy="16" r="16" /><path d="M2.500 16C2.800 9 8 3.500 15.500 2.800L17 5 15.500 9 12 11 13.500 14 10 15.500 8.500 19 6 17 4.500 19.500zM23 13 25 15 24 18 22 17zM20 20 22.500 22 26 22.500 24 26 20 25 18.500 28 17 25z" fill="#8369de" /></svg>
              <span v-fit="114">PLACES</span>
            </a>
            <a class="link maps">
              <svg class="mapicon" viewBox="0 32 576 448"><path d="M384 476.100L192 421.200V35.900L384 90.800V476.100zm32-1.200V88.400L543.100 37.500c15.800-6.300 32.900 5.300 32.900 22.300V394.600c0 9.800-6 18.600-15.100 22.300L416 474.800zM15.100 95.100L160 37.200V423.600L32.900 474.500C17.100 480.800 0 469.200 0 452.200V117.400c0-9.800 6-18.600 15.100-22.300z" /></svg>
              <span v-fit="85">MAPS</span>
            </a>
            <a class="link search">
              <svg class="glass" viewBox="0 0 512 512"><path d="M416 208c0 45.900-14.900 88.300-40 122.700L502.600 457.400c12.500 12.500 12.500 32.800 0 45.300s-32.800 12.500-45.300 0L330.700 376c-34.400 25.200-76.800 40-122.700 40C93.100 416 0 322.900 0 208S93.100 0 208 0S416 93.100 416 208zM208 352a144 144 0 1 0 0-288 144 144 0 1 0 0 288z" /></svg>
              <span v-fit="122">SEARCH</span>
            </a>
            <button class="admin">
              <svg viewBox="0 0 512 512"><path fill-rule="evenodd" d="M399 384.200C376.900 345.800 335.400 320 288 320H224c-47.400 0-88.900 25.800-111 64.200c35.200 39.200 86.200 63.800 143 63.800s107.800-24.700 143-63.800zM0 256a256 256 0 1 1 512 0A256 256 0 1 1 0 256zm256 16a72 72 0 1 0 0-144 72 72 0 1 0 0 144z" /></svg>
              <span v-fit="251">ADMINISTRATOR</span>
            </button>
          </div>

          <section class="card">
            <div class="card-head">
              <h1><svg viewBox="20 76 416 416"><path d="M429.600 92.100c4.900-11.900 2.100-25.600-7-34.700s-22.800-11.900-34.700-7l-352 144c-14.200 5.800-22.200 20.800-19.300 35.800s16.100 25.800 31.400 25.800H224V432c0 15.300 10.800 28.400 25.800 31.400s30-5.100 35.800-19.300l144-352z" transform="translate(4 28)" /></svg><span v-fit="649">DIRECTION FROM USER LOCATION</span></h1>
              <button class="back"><svg viewBox="0 0 26 14"><path d="M8 0V4.500H24A2 2 0 0 1 24 9.500H8V14L0 7z" /></svg><span v-fit="210">BACK TO PLACE</span></button>
            </div>
            <hr>
            <div class="map">
              <svg class="canvas" viewBox="0 0 2168 800">
                <defs><filter id="relief"><feGaussianBlur stdDeviation="1.600" /></filter></defs>
                <rect width="2168" height="800" fill="#dfecd8" />
                <g fill="#cce8c2"><polygon v-for="(p, i) in parks" :key="i" :points="p" /></g>
                <g fill="#d3dfca"><polygon v-for="(p, i) in hills" :key="i" :points="p" /></g>
                <g filter="url(#relief)"><polygon v-for="(r, i) in ridges" :key="i" :points="r.pts" :fill="r.fill" :opacity="r.opacity" /></g>
                <g fill="#f2efee"><polygon v-for="(p, i) in towns" :key="i" :points="p" /></g>
                <g fill="#96dcff"><polygon v-for="(p, i) in water" :key="i" :points="p" /></g>
                <g class="line" stroke="#96dcff" stroke-width="2.200"><polyline v-for="(p, i) in rivers" :key="i" :points="p" /></g>
                <g class="line" stroke="#5fb2ea" stroke-width="1.300" stroke-dasharray="1.500 5"><polyline v-for="(p, i) in ferries" :key="i" :points="p" /></g>
                <g class="line" stroke="#eceefa" stroke-width="7" opacity=".7"><polyline v-for="(p, i) in borders" :key="i" :points="p" /></g>
                <g class="line" stroke="#fff" stroke-width="3"><polyline v-for="(p, i) in minorRoads" :key="i" :points="p" /></g>
                <g class="line" stroke="#fff" stroke-width="6.500"><polyline v-for="(p, i) in majorRoads" :key="i" :points="p" /></g>
                <g class="line" stroke="#ecc632" stroke-width="3"><polyline v-for="(p, i) in majorRoads" :key="i" :points="p" /></g>
                <g class="line toll" stroke="#e2673a" stroke-width="1.200" stroke-dasharray="1.500 2"><polyline v-for="(p, i) in tollRoads" :key="i" :points="p" /></g>
                <g fill="none" stroke="#827dd4" stroke-width="2.400" stroke-dasharray="9 4 4 4"><polyline v-for="(p, i) in borders" :key="i" :points="p" /></g>

                <g class="labels">
                  <text v-for="p in places" :key="p.t" :x="p.x" :y="p.y" :font-size="p.s" :textLength="p.w" lengthAdjust="spacingAndGlyphs" :class="{ city: p.b }">{{ p.t }}</text>
                </g>
                <g v-for="(p, i) in plates" :key="'p' + i" class="plate">
                  <rect :x="p.x + 1" :y="p.y + 1" :width="p.w - 1" height="26" rx="4" />
                  <text :x="p.x + p.w / 2" :y="p.y + 20">{{ p.t }}</text>
                </g>
                <g v-for="(h, i) in hexes" :key="'h' + i" :transform="`translate(${h.x} ${h.y})`" class="plate">
                  <path d="M-21-.5-11-16H11L21-.5 11 16H-11z" />
                  <path class="crown" d="M-14.500-9-11-15H11L14.500-9z" />
                  <text x="0" y="8.500">{{ h.t }}</text>
                </g>

                <polyline class="line" :points="route" stroke="#2d5f99" stroke-width="25" />
                <polyline class="line" :points="route" stroke="#4882c5" stroke-width="16" />
                <circle cx="927" cy="479.500" r="13" fill="#3aafdb" stroke="#fff" stroke-width="4" />
                <circle cx="75" cy="68" r="35.500" fill="#8a8acb" />
                <text x="75" y="76" class="marker">B</text>
                <circle cx="1407.500" cy="513" r="39" fill="#3aafdb" opacity=".12" />
                <path d="M1399 480 1407.500 471 1416 480z" fill="#3aafdb" />
                <circle cx="1407.500" cy="513" r="35.500" fill="#3aafdb" />
                <circle cx="1407.500" cy="513" r="17" fill="none" stroke="#fff" stroke-width="3.600" />

                <g class="logo">
                  <circle cx="35" cy="764.500" r="18.500" fill="#fff" stroke="#6a6d69" stroke-width="3" />
                  <path d="M26 775.500C24 762 28 753.500 37 753.500A9.500 9.500 0 0 1 46 763.500C46 772.500 38 777.500 26 775.500z" fill="#5f625e" />
                  <path d="M37 757 39 762 44 764 39 766 37 771 35 766 30 764 35 762z" fill="#fff" />
                  <text x="59" y="774" textLength="126" lengthAdjust="spacingAndGlyphs">mapbox</text>
                </g>
              </svg>

              <button class="locate"><svg viewBox="0 0 36 36"><circle cx="18" cy="18" r="12.500" /><path d="M18 1V7M18 29V35M1 18H7M29 18H35" /></svg></button>

              <aside class="directions">
                <div class="summary"><b v-fit="126">3h 27min</b><span v-fit="91">280km</span></div>
                <div class="steps">
                  <ol>
                    <li v-for="(s, i) in steps" :key="i">
                      <span v-if="s.icon === 'depart'" class="depart">A</span>
                      <svg v-else class="turn" viewBox="0 0 24 24">
                        <path v-if="s.icon === 'right'" d="M0 23V12Q0 7 5 7H12V0L24 9.500 12 19V12H5Q4 12 4 13V23z" />
                        <path v-else-if="s.icon === 'left'" d="M22 23V12Q22 7 17 7H9V0L-3 9.500 9 19V12H17Q18 12 18 13V23z" />
                        <path v-else d="M2 0H17L12 4.500C16 10 18.500 13 18.500 24H14.500C14.500 15 13 12 9 7.500L2 15z" />
                      </svg>
                      <p v-for="[line, width] in s.lines" :key="line"><span v-fit="width">{{ line }}</span></p>
                      <div class="distance"><span v-if="s.distance" v-fit="s.width">{{ s.distance }}</span></div>
                    </li>
                  </ol>
                  <div class="rail"><i /></div>
                </div>
              </aside>

              <div class="attribution"><span v-fit="115">© Mapbox</span><span v-fit="196">© OpenStreetMap</span><b v-fit="198">Improve this map</b></div>
            </div>
          </section>
        </main>
        <div class="scrollbar"><i /></div>
      </div>
    </div>
  </div>
</template>

<style>
body { background: #fff; }
</style>

<style scoped>
* { box-sizing: border-box; }
svg { display: block; flex: none; }
span, b { white-space: nowrap; }
.desktop { width: 2784px; height: 1774px; padding: 76px 112px 148px; overflow: hidden; font-family: Inter, "Liberation Sans", sans-serif; }
.window { position: relative; width: 2560px; height: 1550px; border-radius: 20px; overflow: hidden; background: #35363a; display: flex; flex-direction: column; box-shadow: 0 0 0 1px #0b0c0c, 0 38px 90px rgba(0, 0, 0, .68); }
.window::after { content: ''; position: absolute; inset: 0; border-radius: 20px; box-shadow: inset 0 2px 0 #686a68, inset 0 0 0 1px rgba(255, 255, 255, .22); pointer-events: none; }

.tabstrip { display: flex; height: 84px; background: #202124; flex: none; }
.lights { display: flex; gap: 16px; padding: 31px 0 0 42px; width: 186px; }
.lights i { width: 24px; height: 24px; border-radius: 50%; }
.red { background: #ee4040; }
.yellow { background: #edc733; }
.green { background: #2bc840; }
.tab { position: relative; display: flex; align-items: center; width: 480px; height: 68px; margin-top: 16px; padding-left: 24px; background: #35363a; border-radius: 16px 16px 0 0; }
.tab::before, .tab::after { content: ''; position: absolute; bottom: 0; width: 16px; height: 16px; }
.tab::before { right: 100%; background: radial-gradient(circle at 0 0, transparent 15.500px, #35363a 16px); }
.tab::after { left: 100%; background: radial-gradient(circle at 100% 0, transparent 15.500px, #35363a 16px); }
.favicon { width: 32px; height: 32px; }
.tab-title { display: flex; flex: none; width: 383px; padding: 0 0 2px 16px; color: #fff; font-size: 24px; }
.tab-title > span { flex: none; white-space: pre; }
.faded { color: #85868a; }
.ghost { color: #55565a; }
.tab-close { width: 18px; height: 18px; stroke: #fff; stroke-width: 3; fill: none; }
.plus { width: 24px; height: 24px; margin: 38px 0 0 32px; stroke: #fff; stroke-width: 4; }
.chevron { width: 18px; height: 12px; margin: 45px 35px 0 auto; stroke: #fff; stroke-width: 3; fill: none; }

.toolbar { display: flex; align-items: center; height: 72px; flex: none; padding: 0 12px 0 30px; }
.nav { width: 28px; height: 28px; margin-right: 36px; stroke: #f5f5f3; stroke-width: 3.200; fill: none; }
.nav .solid { fill: #f5f5f3; stroke: none; }
.nav.dim { stroke: #86878a; }
.omnibox { display: flex; align-items: center; width: 1424px; height: 56px; margin-left: -6px; padding-left: 22px; border-radius: 28px; background: #202124; font-size: 27px; }
.info { width: 28px; height: 28px; margin-right: 18px; stroke: #9b9c9c; stroke-width: 2.600; fill: none; }
.host { flex: none; color: #fff; }
.path { flex: none; color: #989996; margin-right: 41px; }
.pin { width: 22px; height: 28px; fill: #c3c5c2; }
.share { width: 24px; height: 30px; margin-left: 41px; fill: none; stroke: #c3c5c2; stroke-width: 3; }
.starred { width: 31px; height: 29px; margin-left: 37px; fill: none; stroke: #c3c5c2; stroke-width: 2.800; }
.extensions { display: flex; margin-left: 12px; }
.slot { position: relative; display: flex; align-items: center; justify-content: center; width: 64px; height: 56px; flex: none; }
.ext { width: 32px; height: 32px; }
.badge { position: absolute; bottom: 0; left: 8px; width: 48px; height: 24px; border-radius: 5px; font-size: 20px; line-height: 25px; font-weight: 500; text-align: center; color: #fff; }
.badge.violet { left: 32px; width: 28px; background: #6a37b6; font-weight: 600; }
.badge.sky { background: #8dc3f8; color: #26303b; }
.badge.black { background: #000; }
.lcp { position: absolute; top: 12px; width: 32px; height: 18px; background: #ea3c3d; color: #fff; font-weight: 700; font-size: 14px; line-height: 18px; text-align: center; letter-spacing: .5px; }
.inspect { width: 26px; height: 26px; border-radius: 5px; background: linear-gradient(#f4f4f2, #cfd1cf); color: #222; font: italic 700 26px/24px "Liberation Serif", serif; text-align: center; margin-top: -2px; }
.camera { width: 32px; height: 32px; border-radius: 6px; background: conic-gradient(from 0deg, #ea4040, #f2c430 12%, #e8c838 20%, #4cc35a 32%, #35b0e0 42%, #3b8fe0 60%, #a45be0 72%, #e24ba6 85%, #ea4040); }
.abp { width: 32px; height: 32px; background: #ea3c3d; clip-path: polygon(30% 0, 70% 0, 100% 30%, 100% 70%, 70% 100%, 30% 100%, 0 70%, 0 30%); color: #fff; font-weight: 700; font-size: 14px; line-height: 32px; text-align: center; }
.avatar { width: 44px; height: 44px; }

.bookmarks { display: flex; align-items: center; gap: 33px; height: 66px; flex: none; padding: 0 28px 10px; border-bottom: 2px solid #606164; color: #fff; font-size: 23.500px; }
.bookmark { display: flex; align-items: center; gap: 16px; flex: none; }
.bookmark > span { margin-right: 1px; }
.folder { width: 32px; height: 26px; }

.viewport { display: flex; flex: 1; min-height: 0; background: #bccada; }
.page { width: 2530px; border-top: 10px solid #aeb2da; background: #bccada; }
.scrollbar { width: 30px; background: #fafafa; border-left: 2px solid #eeefee; padding: 6px 0 0 7px; }
.scrollbar i { display: block; width: 16px; height: 914px; border-radius: 8px; background: #c1c3c2; }

.navbar, .card { font-family: Lato, sans-serif; }
.navbar { display: flex; align-items: center; height: 112px; padding: 0 149px; background: #8369de; color: #fff; fill: #fff; box-shadow: 0 4px 8px rgba(120, 150, 130, .28); font-weight: 700; }
.brand, .link { display: flex; align-items: center; }
.brand { width: 324px; gap: 10px; font-size: 40px; }
.brand svg { width: 46px; height: 41px; }
.link { font-size: 32px; gap: 9px; }
.list { width: 33px; height: 29px; }
.categories { width: 292px; }
.caret { border: 9px solid transparent; border-top-color: #fff; border-bottom: 0; }
.globe { width: 32px; height: 32px; }
.places { width: 187px; }
.mapicon { width: 37px; height: 29px; }
.maps { gap: 8px; }
.search { margin-left: auto; margin-right: 65px; }
.glass { width: 32px; height: 32px; stroke: #fff; stroke-width: 12; }
.admin { display: flex; align-items: center; gap: 8px; width: 344px; height: 80px; padding: 0 0 4px 26px; border: 0; border-radius: 12px; background: #f9fbfb; color: #000; fill: #000; font: 400 32px Lato, sans-serif; }
.admin svg { width: 32px; height: 32px; }

.card { width: 2232px; height: 978px; margin: 38px 0 0 149px; padding: 32px; border-radius: 12px; background: #fff; box-shadow: 0 4px 8px rgba(100, 130, 120, .3); color: #212529; }
.card-head { display: flex; justify-content: space-between; height: 80px; }
h1 { display: flex; align-items: center; gap: 11px; height: 48px; margin: 0; font-size: 40px; font-weight: 400; fill: #212529; }
h1 svg { width: 40px; height: 40px; }
.back { display: flex; align-items: center; gap: 7px; width: 278px; height: 62px; padding: 0 0 2px 18px; border: 0; border-radius: 8px; background: #8369de; color: #fff; fill: #fff; font: 400 27px Lato, sans-serif; }
.back svg { width: 25px; height: 14px; }
hr { height: 2px; margin: 0 0 32px; border: 0; background: #c6cac7; }

.map { position: relative; height: 800px; overflow: hidden; font-family: Inter, sans-serif; }
.canvas { width: 2168px; height: 800px; }
.line { fill: none; stroke-linejoin: round; stroke-linecap: round; }
.toll { stroke-linecap: butt; }
.labels text { font-family: Roboto, sans-serif; fill: #24272a; paint-order: stroke; stroke: rgba(255, 255, 255, .75); stroke-width: 4px; stroke-linejoin: round; }
.labels .city { font-weight: 500; fill: #000; }
.plate rect, .plate path { fill: #fff; stroke: #1f2328; stroke-width: 2.400; }
.plate .crown { fill: #ea3c3d; stroke: none; }
.plate text { font: 700 18px Roboto, sans-serif; fill: #24272a; text-anchor: middle; letter-spacing: .5px; }
.marker { font: 700 22px "Liberation Sans", sans-serif; fill: #fff; text-anchor: middle; }
.logo text { font: 800 32px Lato, sans-serif; fill: #fff; paint-order: stroke; stroke: #6a6d69; stroke-width: 5px; stroke-linejoin: round; }
.locate { position: absolute; top: 16px; right: 16px; width: 66px; height: 66px; padding: 11px; border: 4px solid rgba(0, 0, 0, .25); border-radius: 11px; background: #fff; background-clip: padding-box; }
.locate svg { width: 36px; height: 36px; fill: none; stroke: #3aafdb; stroke-width: 5; }

.directions { position: absolute; top: 112px; right: 20px; bottom: 0; width: 600px; display: flex; flex-direction: column; font-family: "Liberation Sans", sans-serif; }
.summary { display: flex; align-items: center; gap: 18px; height: 76px; flex: none; padding-left: 20px; background: #000; color: #fff; font-size: 29px; }
.summary span { color: #939393; }
.steps { display: flex; flex: 1; min-height: 0; overflow: hidden; background: rgba(0, 0, 0, .94); }
ol { flex: 1; margin: 0; padding: 40px 0 0 79px; list-style: none; }
li { position: relative; font-size: 28px; line-height: 36px; color: #d5d7d2; }
li:last-child p { color: #a9ada9; }
li::before { content: ''; position: absolute; left: -39px; top: 50px; bottom: 20px; border-left: 4px dotted #58595b; }
p { height: 36px; margin: 0; font-family: Inter, sans-serif; font-weight: 300; font-size: 27px; }
p span, .distance span { display: inline-block; }
.distance { height: 80px; padding-top: 16px; font-family: Inter, sans-serif; font-weight: 300; font-size: 24px; line-height: 34px; color: #9b9c99; }
.depart { position: absolute; left: -46px; top: 3px; color: #fff; font-weight: 700; font-size: 33px; }
.turn { position: absolute; left: -45px; top: 8px; width: 24px; height: 24px; fill: #fff; overflow: visible; }
.rail { width: 30px; flex: none; padding: 6px 0 0 8px; background: #fafafa; }
.rail i { display: block; width: 16px; height: 219px; border-radius: 8px; background: #c1c3c2; }
.attribution { position: absolute; right: 0; bottom: 0; display: flex; align-items: center; width: 547px; height: 40px; padding-left: 9px; background: rgba(255, 255, 255, .55); color: #24272a; font: 24px "Liberation Sans", sans-serif; gap: 8px; }
.attribution b { margin-left: 3px; }
</style>
